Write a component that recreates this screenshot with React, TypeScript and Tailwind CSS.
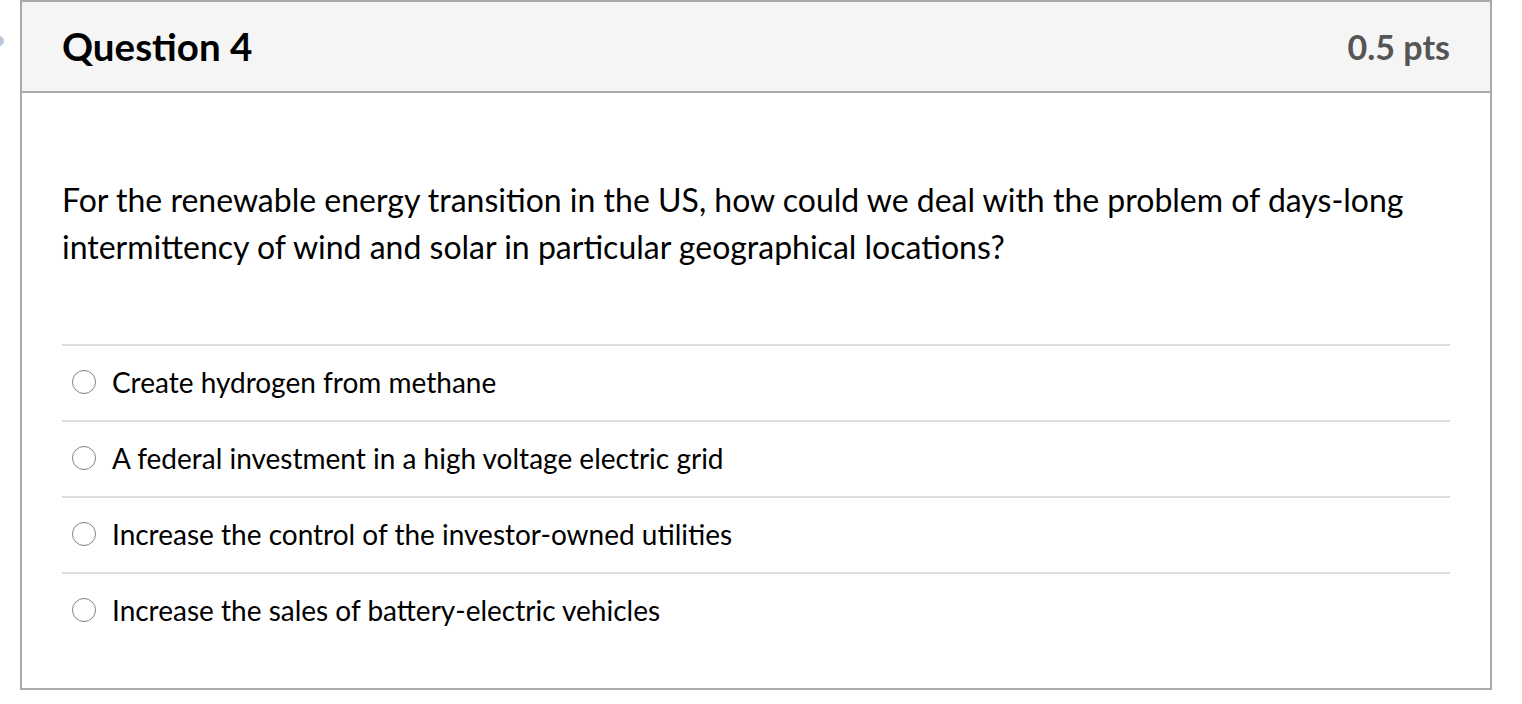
export default function App() {
  const answers = [
    'Create hydrogen from methane',
    'A federal investment in a high voltage electric grid',
    'Increase the control of the investor-owned utilities',
    'Increase the sales of battery-electric vehicles',
  ];

  return (
    <div className="relative min-h-[704px] bg-white font-['Lato','Noto_Sans',sans-serif] text-black">
      {/* edge of something cut off at the left */}
      <div className="absolute left-[-6px] top-[36px] h-[10px] w-[10px] rounded-full bg-[#b8c8d8]" />
      <div className="ml-[20px] w-[1472px] h-[690px] border-2 border-[#aaaaaa]">
        <div className="flex h-[91px] items-center justify-between border-b-2 border-[#aaaaaa] bg-[#f5f5f5] pl-[40px] pr-[40px]">
          <h2 className="text-[38.5px] font-bold leading-none">Question 4</h2>
          <div className="text-[34px] font-bold leading-none text-[#555555]">0.5 pts</div>
        </div>
        <div className="px-[40px] pt-[83px]">
          <p className="text-[32px] leading-[47px]">
            For the renewable energy transition in the US, how could we deal with the problem of days-long intermittency of wind and solar in particular geographical locations?
          </p>
          <div className="mt-[74px]">
            {answers.map((a) => (
              <label key={a} className="flex h-[76px] items-center gap-[16px] border-t-2 border-[#dddddd] pb-[3px] pl-[10px]">
                <span className="h-[24px] w-[24px] shrink-0 rounded-full border-[1.5px] border-[#808080] bg-white" />
                <span className="text-[28px] leading-none">{a}</span>
              </label>
            ))}
          </div>
        </div>
      </div>
    </div>
  );
}
